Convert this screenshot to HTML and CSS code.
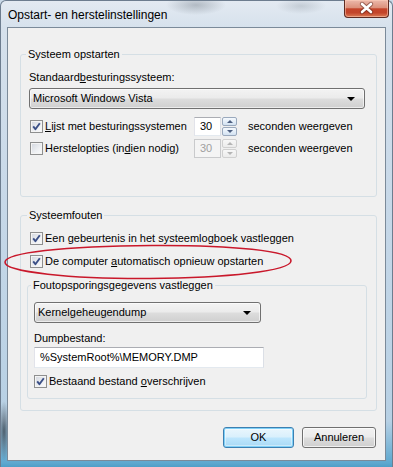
FILE: index.html
```html
<!DOCTYPE html>
<html lang="nl">
<head>
<meta charset="utf-8">
<title>Opstart- en herstelinstellingen</title>
<link rel="stylesheet" href="styles.css">
</head>
<body>
<div class="window">
  <div class="titlebar">
    <span class="title">Opstart- en herstelinstellingen</span>
    <div class="close">
      <svg width="45" height="18" viewBox="0 0 45 18">
        <path d="M18 5 L27 13 M27 5 L18 13" stroke="#5a2219" stroke-width="4.4" stroke-linecap="round" fill="none" opacity="0.55"/>
        <path d="M18 5 L27 13 M27 5 L18 13" stroke="#ffffff" stroke-width="2.6" stroke-linecap="round" fill="none"/>
      </svg>
    </div>
  </div>
  <div class="client">
    <fieldset class="group g1">
      <legend>Systeem opstarten</legend>
      <div class="label">Standaard<u>b</u>esturingssysteem:</div>
      <div class="combo combo-os"><span>Microsoft Windows Vista</span><i class="arrow"></i></div>
      <div class="timerow">
        <label class="check"><span class="box checked"><svg width="13" height="13" viewBox="0 0 13 13"><path d="M3.2 6.4 L5.4 9.2 L9.8 3.2" stroke="#3b4f86" stroke-width="1.9" fill="none" stroke-linejoin="round"/></svg></span><span><u>L</u>ijst met besturingssystemen</span></label>
        <div class="spin"><span class="edit">30</span><span class="updown"><span class="btn up"><i></i></span><span class="btn dn"><i></i></span></span></div>
        <span class="unit">seconden weergeven</span>
      </div>
      <div class="timerow row2">
        <label class="check"><span class="box"></span><span>Herstelopties (in<u>d</u>ien nodig)</span></label>
        <div class="spin disabled"><span class="edit">30</span><span class="updown"><span class="btn up"><i></i></span><span class="btn dn"><i></i></span></span></div>
        <span class="unit">seconden weergeven</span>
      </div>
    </fieldset>

    <fieldset class="group g2">
      <legend>Systeemfouten</legend>
      <label class="check"><span class="box checked"><svg width="13" height="13" viewBox="0 0 13 13"><path d="M3.2 6.4 L5.4 9.2 L9.8 3.2" stroke="#3b4f86" stroke-width="1.9" fill="none" stroke-linejoin="round"/></svg></span><span>Een <u>g</u>ebeurtenis in het systeemlogboek vastleggen</span></label>
      <label class="check second"><span class="box checked"><svg width="13" height="13" viewBox="0 0 13 13"><path d="M3.2 6.4 L5.4 9.2 L9.8 3.2" stroke="#3b4f86" stroke-width="1.9" fill="none" stroke-linejoin="round"/></svg></span><span>De computer <u>a</u>utomatisch opnieuw opstarten</span></label>

      <fieldset class="group g3">
        <legend>Foutopsporingsgegevens vastleggen</legend>
        <div class="combo combo-dump"><span>Kernelgeheugendump</span><i class="arrow"></i></div>
        <div class="label dumplabel">Dumpbestand:</div>
        <div class="textbox">%SystemRoot%\MEMORY.DMP</div>
        <label class="check overwrite"><span class="box checked"><svg width="13" height="13" viewBox="0 0 13 13"><path d="M3.2 6.4 L5.4 9.2 L9.8 3.2" stroke="#3b4f86" stroke-width="1.9" fill="none" stroke-linejoin="round"/></svg></span><span>Bestaand bestand <u>o</u>verschrijven</span></label>
      </fieldset>
    </fieldset>

    <div class="buttons">
      <div class="button default">OK</div>
      <div class="button">Annuleren</div>
    </div>

    <svg class="ring" width="294" height="40" viewBox="0 0 294 40">
      <path d="M150 3.5 C 230 3, 290 9, 289 19 C 288 29, 225 36, 148 36.5 C 70 37, 2 30, 3 20 C 4 11, 60 4, 150 3.5 Z" stroke="#c9182b" stroke-width="1.6" fill="none"/>
    </svg>
  </div>
</div>
</body>
</html>
```
FILE: styles.css
```css
* { box-sizing: border-box; }
html, body { margin: 0; padding: 0; }
body {
  width: 393px;
  height: 467px;
  overflow: hidden;
  font-family: "Liberation Sans", Arial, sans-serif;
  font-size: 11px;
  line-height: 13px;
  color: #000;
  background: #c9d9e8;
}
u { text-decoration: underline; text-underline-offset: 1px; }

.window {
  width: 393px;
  height: 467px;
  display: flex;
  flex-direction: column;
  padding: 0 6px;
  border: 1px solid #6d7d8f;
  border-bottom: none;
  border-radius: 6px 6px 0 0;
  background:
    radial-gradient(ellipse 30px 10px at 195px 4px, rgba(120,130,140,0.45), rgba(120,130,140,0)),
    radial-gradient(ellipse 25px 8px at 300px 5px, rgba(140,150,160,0.35), rgba(140,150,160,0)),
    radial-gradient(ellipse 6px 30px at 3px 430px, rgba(40,50,60,0.7), rgba(40,50,60,0)),
    linear-gradient(180deg, #e3eaf2 0px, #d6e1ec 27px, #c7d8e8 200px, #b7d0e4 420px, #5ea8cf 462px, #4a9cc6 467px);
}

.titlebar {
  height: 26px;
  display: flex;
  align-items: flex-start;
}
.title {
  font-size: 12px;
  line-height: 14px;
  padding: 7px 0 0 1px;
  color: #000;
}
.close {
  margin-left: auto;
  margin-right: -3px;
  margin-top: -1px;
  width: 45px;
  height: 18px;
  border: 1px solid #5e2b22;
  border-top: none;
  border-radius: 0 0 4px 4px;
  background: linear-gradient(180deg, #ecb9ab 0%, #dc917c 45%, #c4442a 52%, #c3452b 75%, #db7b55 100%);
  box-shadow: inset 0 0 0 1px rgba(255,210,190,0.5);
}
.close svg { display: block; margin: -1px 0 0 -1px; }

.client {
  position: relative;
  height: 434px;
  background: #f0f0f0;
  border: 1px solid #7b8a99;
  display: flex;
  flex-direction: column;
}

.group {
  border: 1px solid #d5dfe5;
  border-radius: 3px;
  margin: 0;
  min-width: 0;
}
.group legend {
  padding: 0 2px;
  margin-left: -3px;
  line-height: 13px;
}
.g1 {
  margin: 20px 8px 0 12px;
  padding: 10px 11px 38px 8px;
}
.g2 {
  margin: 12px 8px 0 12px;
  padding: 10px 9px 11px 9px;
}
.g3 {
  margin: 11px 0 0 -3px;
  padding: 10px 6px 10px 6px;
}

.label { height: 13px; }

.combo {
  height: 21px;
  border: 1px solid #707070;
  border-radius: 3px;
  background: linear-gradient(180deg, #f3f3f3 0%, #ebebeb 48%, #dddddd 52%, #cfcfcf 100%);
  box-shadow: inset 0 0 0 1px rgba(255,255,255,0.6);
  display: flex;
  align-items: center;
  padding: 0 9px 0 3px;
}
.combo span { flex: 1; }
.combo .arrow {
  width: 0; height: 0;
  border-left: 4px solid transparent;
  border-right: 4px solid transparent;
  border-top: 4px solid #000;
}
.combo-os { margin-top: 4px; }
.combo-dump { width: 227px; }

.timerow {
  margin-top: 8px;
  height: 19px;
  display: grid;
  grid-template-columns: 165px 43px auto;
  column-gap: 0;
  align-items: center;
}
.timerow .unit { padding-left: 11px; }
.timerow.row2 { margin-top: 3px; }
.timerow .check { margin-left: 1px; }

.check {
  display: flex;
  align-items: center;
  gap: 2px;
  height: 13px;
}
.box {
  width: 13px;
  height: 13px;
  flex: none;
  border: 1px solid #8e8f8f;
  background: linear-gradient(135deg, #d2d6de 0%, #eef0f3 60%, #fbfbfb 100%);
  box-shadow: inset 0 0 0 1px #f4f4f4;
  position: relative;
}
.box svg { position: absolute; left: -1px; top: -1px; }
.second { margin-top: 10px; }

.spin {
  display: flex;
  gap: 1px;
  height: 19px;
}
.edit {
  width: 28px;
  height: 19px;
  background: #fff;
  border: 1px solid #abadb3;
  border-color: #abadb3 #dbdfe6 #e3e9ef #e2e3ea;
  padding: 2px 0 0 5px;
}
.updown {
  width: 15px;
  display: flex;
  flex-direction: column;
  gap: 1px;
}
.updown .btn {
  flex: 1;
  border: 1px solid #9aa9bd;
  border-radius: 2px;
  background: linear-gradient(180deg, #f5f9fd 0%, #e4eef8 50%, #d3e2f1 100%);
  display: flex;
  align-items: center;
  justify-content: center;
}
.updown .up i {
  width: 0; height: 0;
  border-left: 3px solid transparent;
  border-right: 3px solid transparent;
  border-bottom: 3px solid #4d5f80;
}
.updown .dn i {
  width: 0; height: 0;
  border-left: 3px solid transparent;
  border-right: 3px solid transparent;
  border-top: 3px solid #4d5f80;
}
.spin.disabled .edit {
  background: #f4f4f4;
  border-color: #c9cacc;
  color: #a0a0a0;
}
.spin.disabled .btn {
  border-color: #d0d0d0;
  background: linear-gradient(180deg, #f7f7f7, #ececec);
}
.spin.disabled .up i { border-bottom-color: #b5b5b5; }
.spin.disabled .dn i { border-top-color: #b5b5b5; }

.dumplabel { margin-top: 9px; }
.textbox {
  margin-top: 2px;
  width: 230px;
  height: 21px;
  background: #fff;
  border: 1px solid #abadb3;
  border-color: #abadb3 #dbdfe6 #e3e9ef #e2e3ea;
  padding: 3px 0 0 5px;
}
.overwrite { margin-top: 7px; }

.buttons {
  margin-top: 16px;
  padding-right: 9px;
  display: flex;
  justify-content: flex-end;
  gap: 8px;
}
.button {
  height: 21px;
  width: 74px;
  border: 1px solid #707070;
  border-radius: 3px;
  background: linear-gradient(180deg, #f2f2f2 0%, #ebebeb 48%, #dddddd 52%, #cfcfcf 100%);
  box-shadow: inset 0 0 0 1px rgba(255,255,255,0.7);
  text-align: center;
  line-height: 19px;
}
.button.default {
  width: 71px;
  border-color: #3c7fb1;
  background: linear-gradient(180deg, #eaf6fd 0%, #d9f0fc 48%, #bee6fd 52%, #a7d9f5 100%);
  box-shadow: inset 0 0 0 1px #7fd0f7, inset 0 0 0 2px rgba(255,255,255,0.4);
}

.ring {
  position: absolute;
  left: -6px;
  top: 214px;
  pointer-events: none;
}
```
